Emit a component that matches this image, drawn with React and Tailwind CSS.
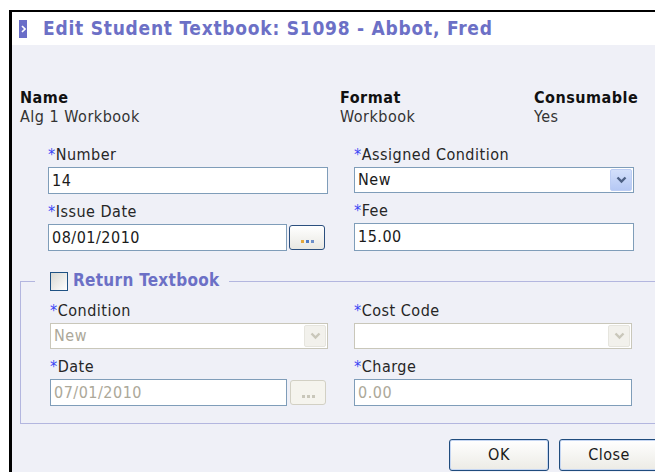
import React from "react";

const font = { fontFamily: '"DejaVu Sans Condensed", "DejaVu Sans", sans-serif' };

function Label({ children }) {
  return (
    <div className="h-[19px] leading-[19px] mb-[3px] text-[16px] text-[#262626] whitespace-nowrap">
      <span className="text-[#3b46f5]">*</span>
      {children}
    </div>
  );
}

function TextBox({ value, disabled, className = "" }) {
  return (
    <div
      className={`h-[27px] border border-[#7f9db9] bg-white flex items-center px-[3px] text-[16px] ${
        disabled ? "text-[#aca899]" : "text-[#1a1a1a]"
      } ${className}`}
    >
      {value}
    </div>
  );
}

function Chevron({ color }) {
  return (
    <svg width="11" height="8" viewBox="0 0 11 8">
      <path d="M1.5 1.5 L5.5 5.5 L9.5 1.5" fill="none" stroke={color} strokeWidth="2.4" />
    </svg>
  );
}

function Select({ value, disabled }) {
  return (
    <div
      className={`h-[26px] border bg-white flex items-center pl-[3px] pr-[1px] text-[16px] ${
        disabled ? "border-[#c9c7ba] text-[#aca899]" : "border-[#7f9db9] text-[#1a1a1a]"
      }`}
    >
      <div className="flex-1">{value}</div>
      {disabled ? (
        <div className="w-[22px] h-[22px] rounded-[2px] border border-[#e6e5de] bg-[#f2f1ec] flex items-center justify-center">
          <Chevron color="#c9c7ba" />
        </div>
      ) : (
        <div className="w-[22px] h-[22px] rounded-[2px] border border-[#bccdf4] bg-gradient-to-b from-[#d3e0fb] to-[#b5c8f4] flex items-center justify-center">
          <Chevron color="#4d6185" />
        </div>
      )}
    </div>
  );
}

function DotsButton({ disabled, className = "" }) {
  const dot = disabled ? "bg-[#c9c7ba]" : "";
  return (
    <div
      className={`w-[36px] h-[25px] rounded-[3px] border flex items-end justify-center gap-[2px] pb-[6px] ${
        disabled
          ? "border-[#d2d0c4] bg-[#f5f4ee]"
          : "border-[#2b4f7e] bg-gradient-to-b from-white to-[#e9e8e2]"
      } ${className}`}
    >
      <span className={`w-[3px] h-[3px] ${dot || "bg-[#e4a83c]"}`} />
      <span className={`w-[3px] h-[3px] ${dot || "bg-[#4f7ac4]"}`} />
      <span className={`w-[3px] h-[3px] ${dot || "bg-[#6d8fc9]"}`} />
    </div>
  );
}

function Button({ children }) {
  return (
    <button className="w-[100px] h-[32px] rounded-[3px] border border-[#1f4b7d] bg-gradient-to-b from-white to-[#ecebe5] shadow-[inset_0_0_0_1px_#c5d6f2] text-[16px] text-[#1a1a1a]">
      {children}
    </button>
  );
}

export default function App() {
  return (
    <div
      className="w-[655px] h-[472px] overflow-hidden bg-white pt-[10px] pl-[9px] tracking-[0.5px]"
      style={font}
    >
      <div className="w-[700px] h-[520px] border-l-[3px] border-t-[2px] border-black bg-[#eff0f7]">
        {/* title bar */}
        <div className="h-[33px] bg-white flex items-center pl-[7px]">
          <div className="w-[8px] h-[18px] bg-[#6a6ec8] flex items-center justify-center">
            <svg width="5" height="8" viewBox="0 0 5 8">
              <path d="M1 1 L4 4 L1 7" fill="none" stroke="white" strokeWidth="1.6" />
            </svg>
          </div>
          <div className="ml-[16px] text-[19px] tracking-[0.75px] font-bold text-[#6c70c6] whitespace-nowrap leading-none">
            Edit Student Textbook: S1098 - Abbot, Fred
          </div>
        </div>

        <div className="pl-[8px] pt-[43px]">
          {/* textbook info */}
          <div className="grid grid-cols-[320px_194px_1fr] text-[16px] leading-[19px]">
            <div>
              <div className="font-bold text-[#111]">Name</div>
              <div className="text-[#333]">Alg 1 Workbook</div>
            </div>
            <div>
              <div className="font-bold text-[#111]">Format</div>
              <div className="text-[#333]">Workbook</div>
            </div>
            <div>
              <div className="font-bold text-[#111]">Consumable</div>
              <div className="text-[#333]">Yes</div>
            </div>
          </div>

          {/* issue fields */}
          <div className="ml-[28px] mt-[19px] grid grid-cols-[280px_280px] gap-x-[26px]">
            <div>
              <Label>Number</Label>
              <TextBox value="14" className="h-[26px]" />
              <div className="mt-[8px]">
                <Label>Issue Date</Label>
                <div className="flex items-center">
                  <TextBox value="08/01/2010" className="w-[239px]" />
                  <DotsButton className="ml-[2px]" />
                </div>
              </div>
            </div>
            <div>
              <Label>Assigned Condition</Label>
              <Select value="New" />
              <div className="mt-[8px]">
                <Label>Fee</Label>
                <TextBox value="15.00" className="h-[28px]" />
              </div>
            </div>
          </div>

          {/* return section */}
          <fieldset className="mt-[20px] w-[680px] border border-[#b3b6df] pl-[29px] pt-[10px] pb-[17px]">
            <legend className="ml-[-15px] pl-[15px] pr-[10px] flex items-center h-[20px]">
              <span className="w-[18px] h-[19px] border border-[#1f5283] bg-gradient-to-br from-[#d8d8d2] to-white" />
              <span className="ml-[5px] text-[17px] tracking-[0.3px] font-bold text-[#6c70c6]">
                Return Textbook
              </span>
            </legend>
            <div className="grid grid-cols-[278px_278px] gap-x-[26px]">
              <div>
                <Label>Condition</Label>
                <Select value="New" disabled />
                <div className="mt-[8px]">
                  <Label>Date</Label>
                  <div className="flex items-center">
                    <TextBox value="07/01/2010" disabled className="w-[237px]" />
                    <DotsButton disabled className="ml-[3px]" />
                  </div>
                </div>
              </div>
              <div>
                <Label>Cost Code</Label>
                <Select value="" disabled />
                <div className="mt-[8px]">
                  <Label>Charge</Label>
                  <TextBox value="0.00" disabled />
                </div>
              </div>
            </div>
          </fieldset>

          <div className="mt-[15px] ml-[429px] flex gap-[10px]">
            <Button>OK</Button>
            <Button>Close</Button>
          </div>
        </div>
      </div>
    </div>
  );
}
